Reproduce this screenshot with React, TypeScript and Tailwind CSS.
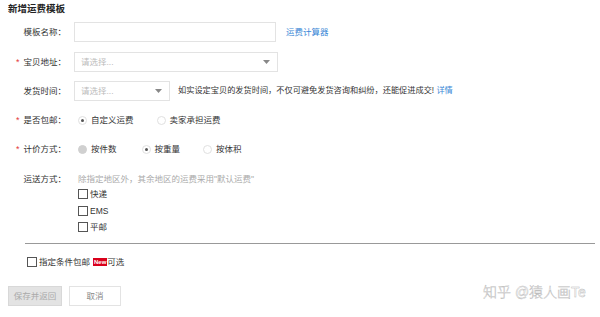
import React from 'react';

const font = { fontFamily: '"Liberation Sans", "Noto Sans CJK SC", sans-serif' };

function Label({ text, required }: { text: string; required?: boolean }) {
  return (
    <div className="w-[58px] shrink-0 flex justify-end items-center text-[#333]">
      {required && <span className="text-[#e4393c] mr-[4px] text-[9px]">*</span>}
      <span>{text}：</span>
    </div>
  );
}

function Radio({ checked, disabled, label, className }: { checked?: boolean; disabled?: boolean; label: string; className?: string }) {
  return (
    <label className={`flex items-center ${className ?? ''}`}>
      <span
        className={`w-[9px] h-[9px] rounded-full border flex items-center justify-center mr-[4px] ${disabled ? 'bg-[#d0d0d0] border-[#d0d0d0]' : 'bg-white border-[#e0e0e0]'}`}
      >
        {checked && <span className="w-[3px] h-[3px] rounded-full bg-[#555]" />}
      </span>
      <span className="text-[#333]">{label}</span>
    </label>
  );
}

function Select({ width }: { width: string }) {
  return (
    <div className={`${width} h-[20px] border border-[#e3e3e3] bg-white flex items-center justify-between pl-[6px] pr-[7px]`}>
      <span className="text-[#bbb]">请选择...</span>
      <svg width="7" height="4" viewBox="0 0 7 4">
        <path d="M0 0h7L3.5 4z" fill="#888" />
      </svg>
    </div>
  );
}

function Check({ label }: { label: React.ReactNode }) {
  return (
    <div className="flex items-center">
      <span className="w-[10px] h-[10px] border border-[#555] bg-white mr-[2px]" />
      <span className="text-[#333]">{label}</span>
    </div>
  );
}

export default function App() {
  return (
    <div className="w-[600px] h-[317px] bg-white relative text-[8.5px] leading-[12px] overflow-hidden" style={font}>
      <div className="pl-[8px] pt-[3px]">
        <div className="text-[9.5px] font-bold text-[#222]">新增运费模板</div>

        <div className="flex flex-col mt-[7px]">
          {/* 模板名称 */}
          <div className="flex items-center h-[20px] gap-[8px]">
            <Label text="模板名称" />
            <div className="w-[202px] h-[20px] border border-[#e3e3e3] bg-white" />
            <a className="text-[#3a87d6] ml-[2px]">运费计算器</a>
          </div>

          {/* 宝贝地址 */}
          <div className="flex items-center h-[20px] gap-[8px] mt-[10px]">
            <Label text="宝贝地址" required />
            <Select width="w-[204px]" />
          </div>

          {/* 发货时间 */}
          <div className="flex items-center h-[20px] gap-[8px] mt-[9px]">
            <Label text="发货时间" />
            <Select width="w-[96px]" />
            <span className="text-[#333] text-[8.2px]">
              如实设定宝贝的发货时间，不仅可避免发货咨询和纠纷，还能促进成交! <a className="text-[#3a87d6]">详情</a>
            </span>
          </div>

          {/* 是否包邮 */}
          <div className="flex items-center h-[20px] gap-[8px] mt-[9px]">
            <Label text="是否包邮" required />
            <Radio checked label="自定义运费" className="ml-[4px]" />
            <Radio label="卖家承担运费" className="ml-[15px]" />
          </div>

          {/* 计价方式 */}
          <div className="flex items-center h-[20px] gap-[8px] mt-[9px]">
            <Label text="计价方式" required />
            <Radio disabled label="按件数" className="ml-[4px]" />
            <Radio checked label="按重量" className="ml-[17px]" />
            <Radio label="按体积" className="ml-[15px]" />
          </div>

          {/* 运送方式 */}
          <div className="flex items-center h-[20px] gap-[8px] mt-[10px]">
            <Label text="运送方式" />
            <span className="text-[#aaa] ml-[4px]">除指定地区外，其余地区的运费采用"默认运费"</span>
          </div>
          <div className="flex flex-col gap-[4.5px] pl-[70px] -mt-[1px]">
            <Check label="快递" />
            <Check label="EMS" />
            <Check label="平邮" />
          </div>
        </div>

        <div className="ml-[17px] mr-[5px] mt-[10px] border-t border-[#999]" />

        <div className="flex items-center ml-[19px] mt-[12px]">
          <Check
            label={
              <span className="flex items-center">
                指定条件包邮
                <span className="ml-[3px] bg-[#d9001b] text-white text-[6px] leading-[8px] px-[1px] font-bold">New</span>
                可选
              </span>
            }
          />
        </div>

        <div className="flex items-center gap-[7px] mt-[18px]">
          <button className="w-[54px] h-[20px] bg-[#e3e3e3] border border-[#d8d8d8] text-[#aaa] text-[8.5px]">保存并返回</button>
          <button className="w-[52px] h-[20px] bg-white border border-[#e3e3e3] text-[#888] text-[8.5px]">取消</button>
        </div>
      </div>

      {/* watermark */}
      <div className="absolute left-[483px] top-[283px] whitespace-nowrap text-[14px] leading-[18px] font-light text-white [-webkit-text-stroke:0.4px_#b5b5b5]">
        知乎 @猿人画Te
      </div>
    </div>
  );
}
